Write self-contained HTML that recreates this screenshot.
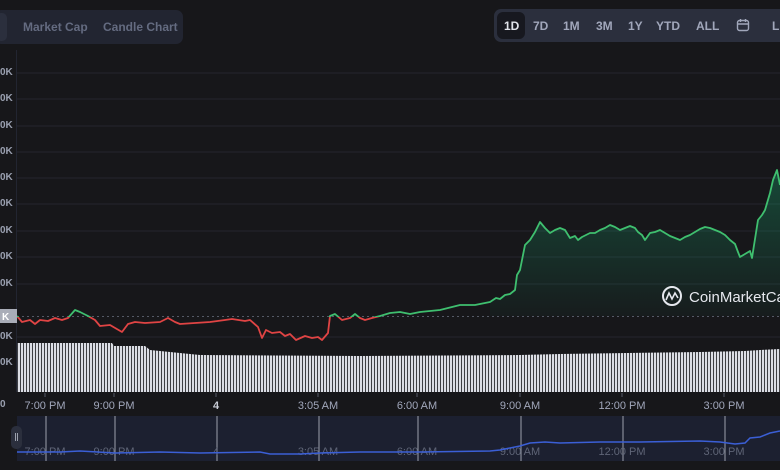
<!DOCTYPE html>
<html><head><style>
body{margin:0;width:780px;height:470px;overflow:hidden;background:#17171a;font-family:"Liberation Sans",sans-serif;position:relative}
.tabs{position:absolute;left:-6px;top:10px;width:189px;height:34px;background:#222531;border-radius:7px}
.tabs .act{position:absolute;left:2px;top:3px;width:11px;height:28px;background:#2b2f3d;border-radius:5px}
.tabs span{position:absolute;top:10px;font-size:12px;color:#646b80;font-weight:bold}
.rng{position:absolute;left:494px;top:9px;width:300px;height:33px;background:#2b2f3d;border-radius:7px}
.rng .act{position:absolute;left:3px;top:3px;width:28px;height:27px;background:#17181f;border-radius:6px}
.rng span{position:absolute;top:10px;font-size:12px;color:#a1a7bb;font-weight:bold}
.yl{position:absolute;left:0;font-size:10px;color:#9aa0b0;font-weight:bold}
.xl{position:absolute;top:400px;font-size:11px;color:#a1a7bb;transform:translateX(-50%)}
</style></head><body>
<div class="tabs"><div class="act"></div><span style="left:-1px;color:#a1a7bb">e</span><span style="left:29px">Market Cap</span><span style="left:109px">Candle Chart</span></div>
<div class="rng"><div class="act"></div><span style="left:10px;color:#e0e3ea">1D</span><span style="left:39px">7D</span><span style="left:69px">1M</span><span style="left:102px">3M</span><span style="left:134px">1Y</span><span style="left:162px">YTD</span><span style="left:202px">ALL</span>
<svg style="position:absolute;left:242px;top:9px" width="14" height="14" viewBox="0 0 14 14" fill="none" stroke="#a1a7bb" stroke-width="1.4"><rect x="1.5" y="2.5" width="11" height="10" rx="2"/><path d="M1.5 6h11M4.5 1v3M9.5 1v3"/></svg>
<span style="left:278px">L</span></div>
<svg width="780" height="470" style="position:absolute;left:0;top:0">
<defs>
<pattern id="st" width="3" height="10" patternUnits="userSpaceOnUse"><rect width="2.2" height="10" fill="#dcdee5"/></pattern>
<linearGradient id="gg" x1="0" y1="0" x2="0" y2="1"><stop offset="0" stop-color="#16c784" stop-opacity="0.28"/><stop offset="1" stop-color="#16c784" stop-opacity="0.03"/></linearGradient>
<clipPath id="up"><rect x="0" y="0" width="780" height="317"/></clipPath>
<clipPath id="dn"><rect x="0" y="317" width="780" height="100"/></clipPath>
</defs>
<line x1="16.5" y1="50" x2="16.5" y2="392" stroke="#222531"/>
<g stroke="#24262e" stroke-width="1">
<line x1="17" y1="73" x2="780" y2="73"/><line x1="17" y1="99" x2="780" y2="99"/><line x1="17" y1="126" x2="780" y2="126"/><line x1="17" y1="152" x2="780" y2="152"/><line x1="17" y1="178" x2="780" y2="178"/><line x1="17" y1="204" x2="780" y2="204"/><line x1="17" y1="231" x2="780" y2="231"/><line x1="17" y1="257" x2="780" y2="257"/><line x1="17" y1="284" x2="780" y2="284"/><line x1="17" y1="337" x2="780" y2="337"/>
</g>
<line x1="17" y1="316.5" x2="780" y2="316.5" stroke="#555a66" stroke-dasharray="2 3"/>
<polygon fill="url(#st)" points="17,343 112,343 114,346 145,346 150,350 200,355 360,356 520,355 560,354 700,352 745,351 760,350 780,349 780,392 17,392"/>
<g id="line">
<polyline id="pl" fill="none" stroke-width="1.8" stroke-linejoin="round" points="17,316 22,322 30,320 35,324 40,320 48,321 55,318 62,320 68,318 75,310 80,312 88,316 95,320 100,326 110,325 122,332 128,324 135,322 145,323 160,322 168,318 175,322 180,324 195,323 210,322 225,320 232,319 245,321 250,320 258,327 262,338 266,330 272,333 280,332 285,336 290,334 296,340 305,336 312,338 318,337 322,340 328,333 330,316 335,314 342,320 350,318 355,314 360,318 365,320 372,318 380,316 390,313 400,312 410,314 420,312 440,310 460,305 475,305 490,302 496,298 500,299 505,295 510,294 515,290 517,275 520,270 525,245 530,240 535,232 540,222 545,228 550,233 555,230 560,228 565,230 570,238 575,236 578,240 582,237 590,233 595,233 600,230 605,228 610,225 615,227 620,230 625,228 630,226 635,228 638,232 642,235 645,240 650,233 655,232 660,230 665,233 670,236 675,238 680,240 685,237 690,235 695,232 700,229 705,227 710,228 715,230 720,232 725,235 730,240 735,244 738,252 740,257 745,254 750,251 752,258 758,220 762,215 765,210 770,193 773,180 777,170 780,185"/>
</g>
<polygon clip-path="url(#up)" fill="url(#gg)" points="490,316 490,302 496,298 500,299 505,295 510,294 515,290 517,275 520,270 525,245 530,240 535,232 540,222 545,228 550,233 555,230 560,228 565,230 570,238 575,236 578,240 582,237 590,233 595,233 600,230 605,228 610,225 615,227 620,230 625,228 630,226 635,228 638,232 642,235 645,240 650,233 655,232 660,230 665,233 670,236 675,238 680,240 685,237 690,235 695,232 700,229 705,227 710,228 715,230 720,232 725,235 730,240 735,244 738,252 740,257 745,254 750,251 752,258 758,220 762,215 765,210 770,193 773,180 777,170 780,185 780,316"/>
<use href="#pl" clip-path="url(#up)" stroke="#3fbf6f"/>
<use href="#pl" clip-path="url(#dn)" stroke="#e04444"/>
<rect x="0" y="309" width="17" height="14" fill="#a9adb8"/>
<text x="2" y="320" font-size="10" font-weight="bold" fill="#fff" font-family="Liberation Sans">K</text>
<g stroke="#555a66"><line x1="45" y1="393" x2="45" y2="397"/><line x1="114" y1="393" x2="114" y2="397"/><line x1="216" y1="393" x2="216" y2="397"/><line x1="318" y1="393" x2="318" y2="397"/><line x1="417" y1="393" x2="417" y2="397"/><line x1="520" y1="393" x2="520" y2="397"/><line x1="622" y1="393" x2="622" y2="397"/><line x1="724" y1="393" x2="724" y2="397"/></g>
<rect x="17" y="416" width="763" height="45" fill="#1c2030"/>
<g stroke="#9ca1ad" stroke-width="1"><line x1="46" y1="416" x2="46" y2="461"/><line x1="115" y1="416" x2="115" y2="461"/><line x1="217" y1="416" x2="217" y2="461"/><line x1="319" y1="416" x2="319" y2="461"/><line x1="418" y1="416" x2="418" y2="461"/><line x1="521" y1="416" x2="521" y2="461"/><line x1="623" y1="416" x2="623" y2="461"/><line x1="725" y1="416" x2="725" y2="461"/></g>
<g font-size="11" fill="#5f6577" font-family="Liberation Sans" text-anchor="middle"><text x="45" y="455">7:00 PM</text><text x="114" y="455">9:00 PM</text><text x="216" y="455">4</text><text x="318" y="455">3:05 AM</text><text x="417" y="455">6:00 AM</text><text x="520" y="455">9:00 AM</text><text x="622" y="455">12:00 PM</text><text x="724" y="455">3:00 PM</text></g>
<polyline fill="none" stroke="#3b5fd6" stroke-width="1.5" points="17,452 60,452 80,451 115,453 160,452 200,453 260,452 270,454 300,454 320,453 360,452 420,452 490,451 500,450 520,446 530,443 545,442 560,443 600,442 640,442 700,441 720,442 735,444 745,443 750,438 760,437 770,433 780,431"/>
<rect x="11" y="426" width="11" height="23" rx="5" fill="#2b2f3d"/>
<g stroke="#9ca1ad"><line x1="15.5" y1="433" x2="15.5" y2="441"/><line x1="17.5" y1="433" x2="17.5" y2="441"/></g>
<g fill="#e6e8ee" font-size="15" font-family="Liberation Sans">
<circle cx="672" cy="296" r="9" fill="none" stroke="#e6e8ee" stroke-width="2"/>
<path d="M666 300 L669 293 L672 299 L675 293 L678 298" fill="none" stroke="#e6e8ee" stroke-width="1.6"/>
<text x="689" y="302">CoinMarketCap</text></g>
</svg>
<div class="yl" style="top:67px">0K</div><div class="yl" style="top:93px">0K</div><div class="yl" style="top:120px">0K</div><div class="yl" style="top:146px">0K</div><div class="yl" style="top:172px">0K</div><div class="yl" style="top:198px">0K</div><div class="yl" style="top:225px">0K</div><div class="yl" style="top:251px">0K</div><div class="yl" style="top:278px">0K</div><div class="yl" style="top:331px">0K</div><div class="yl" style="top:357px">0K</div><div class="yl" style="top:399px">0</div>
<div class="xl" style="left:45px">7:00 PM</div><div class="xl" style="left:114px">9:00 PM</div><div class="xl" style="left:216px;font-weight:bold;color:#c8ccd6">4</div><div class="xl" style="left:318px">3:05 AM</div><div class="xl" style="left:417px">6:00 AM</div><div class="xl" style="left:520px">9:00 AM</div><div class="xl" style="left:622px">12:00 PM</div><div class="xl" style="left:724px">3:00 PM</div>
</body></html>
